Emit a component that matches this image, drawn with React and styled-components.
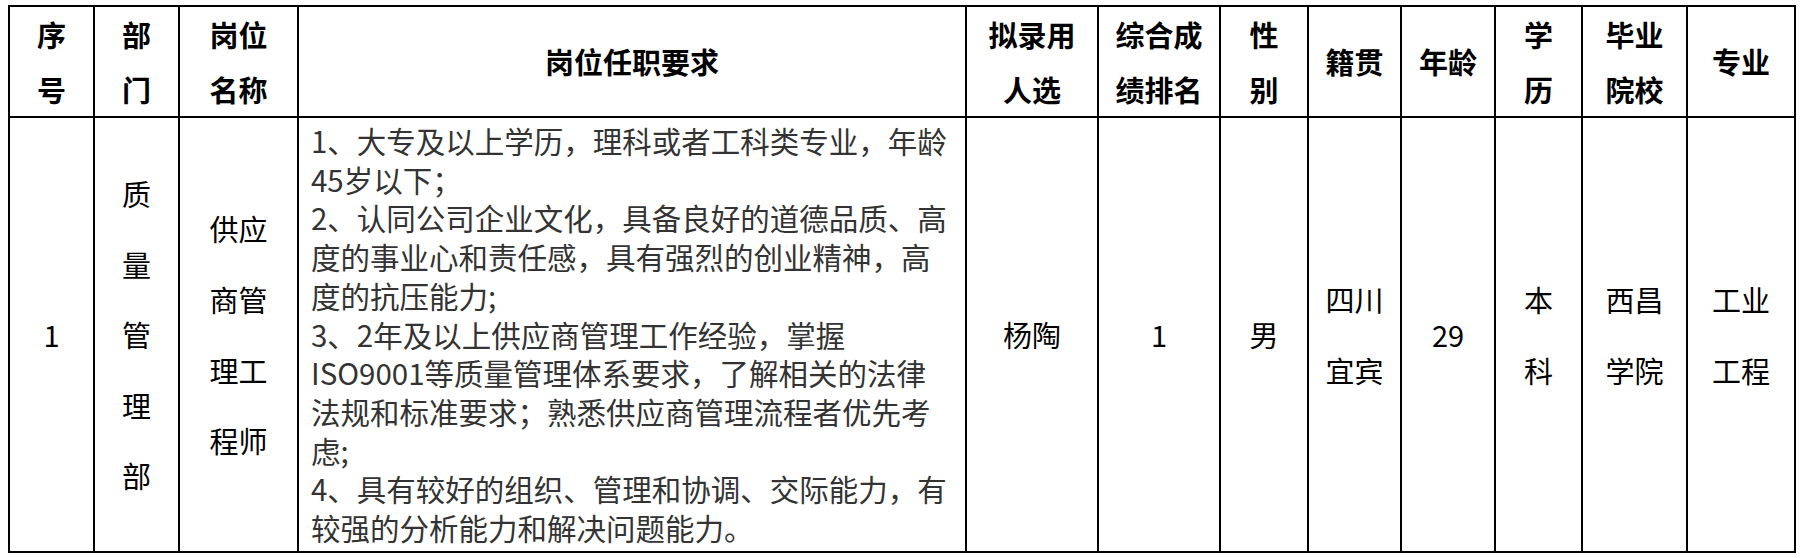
import React from "react";
import styled, { createGlobalStyle } from "styled-components";

const GlobalStyle = createGlobalStyle`
  html, body {
    margin: 0;
    padding: 0;
    background: #fff;
  }
  body {
    font-family: "Noto Sans CJK SC", "Noto Sans", sans-serif;
  }
`;

const columnWidths = [83, 83, 117, 666, 130, 120, 86, 91, 92, 85, 103, 106];

const Page = styled.div`
  padding: 5px 0 0 8px;
`;

const Sheet = styled.div`
  display: inline-grid;
  grid-template-columns: ${({ widths }) => widths.map((w) => `${w}px`).join(" ")};
  grid-template-rows: 109px 433px;
  gap: 2px;
  padding: 2px;
  background: #000;
`;

const Cell = styled.div`
  background: #fff;
  display: flex;
  align-items: center;
  justify-content: center;
  text-align: center;
  white-space: pre-line;
  font-size: 29px;
  color: #000;
  overflow: hidden;
`;

const HeadCell = styled(Cell)`
  font-weight: 700;
  line-height: 55px;
`;

const BodyCell = styled(Cell)`
  font-weight: 400;
  line-height: 70.6px;
`;

const RequirementCell = styled(Cell)`
  display: block;
  text-align: left;
  white-space: normal;
  padding: 3px 0 0 12px;
  font-size: 29.5px;
  line-height: 38.7px;
  color: #333;
`;

const Line = styled.div`
  white-space: nowrap;
`;

const headers = [
  "序\n号",
  "部\n门",
  "岗位\n名称",
  "岗位任职要求",
  "拟录用\n人选",
  "综合成\n绩排名",
  "性\n别",
  "籍贯",
  "年龄",
  "学\n历",
  "毕业\n院校",
  "专业",
];

const requirementLines = [
  "1、大专及以上学历，理科或者工科类专业，年龄",
  "45岁以下；",
  "2、认同公司企业文化，具备良好的道德品质、高",
  "度的事业心和责任感，具有强烈的创业精神，高",
  "度的抗压能力;",
  "3、2年及以上供应商管理工作经验，掌握",
  "ISO9001等质量管理体系要求，了解相关的法律",
  "法规和标准要求；熟悉供应商管理流程者优先考",
  "虑;",
  "4、具有较好的组织、管理和协调、交际能力，有",
  "较强的分析能力和解决问题能力。",
];

const row = [
  "1",
  "质\n量\n管\n理\n部",
  "供应\n商管\n理工\n程师",
  null,
  "杨陶",
  "1",
  "男",
  "四川\n宜宾",
  "29",
  "本\n科",
  "西昌\n学院",
  "工业\n工程",
];

function App() {
  return (
    <>
      <GlobalStyle />
      <Page>
        <Sheet widths={columnWidths}>
          {headers.map((h) => (
            <HeadCell key={h}>{h}</HeadCell>
          ))}
          {row.map((value, i) =>
            value === null ? (
              <RequirementCell key={i}>
                {requirementLines.map((line) => (
                  <Line key={line}>{line}</Line>
                ))}
              </RequirementCell>
            ) : (
              <BodyCell key={i}>{value}</BodyCell>
            )
          )}
        </Sheet>
      </Page>
    </>
  );
}

export default App;
